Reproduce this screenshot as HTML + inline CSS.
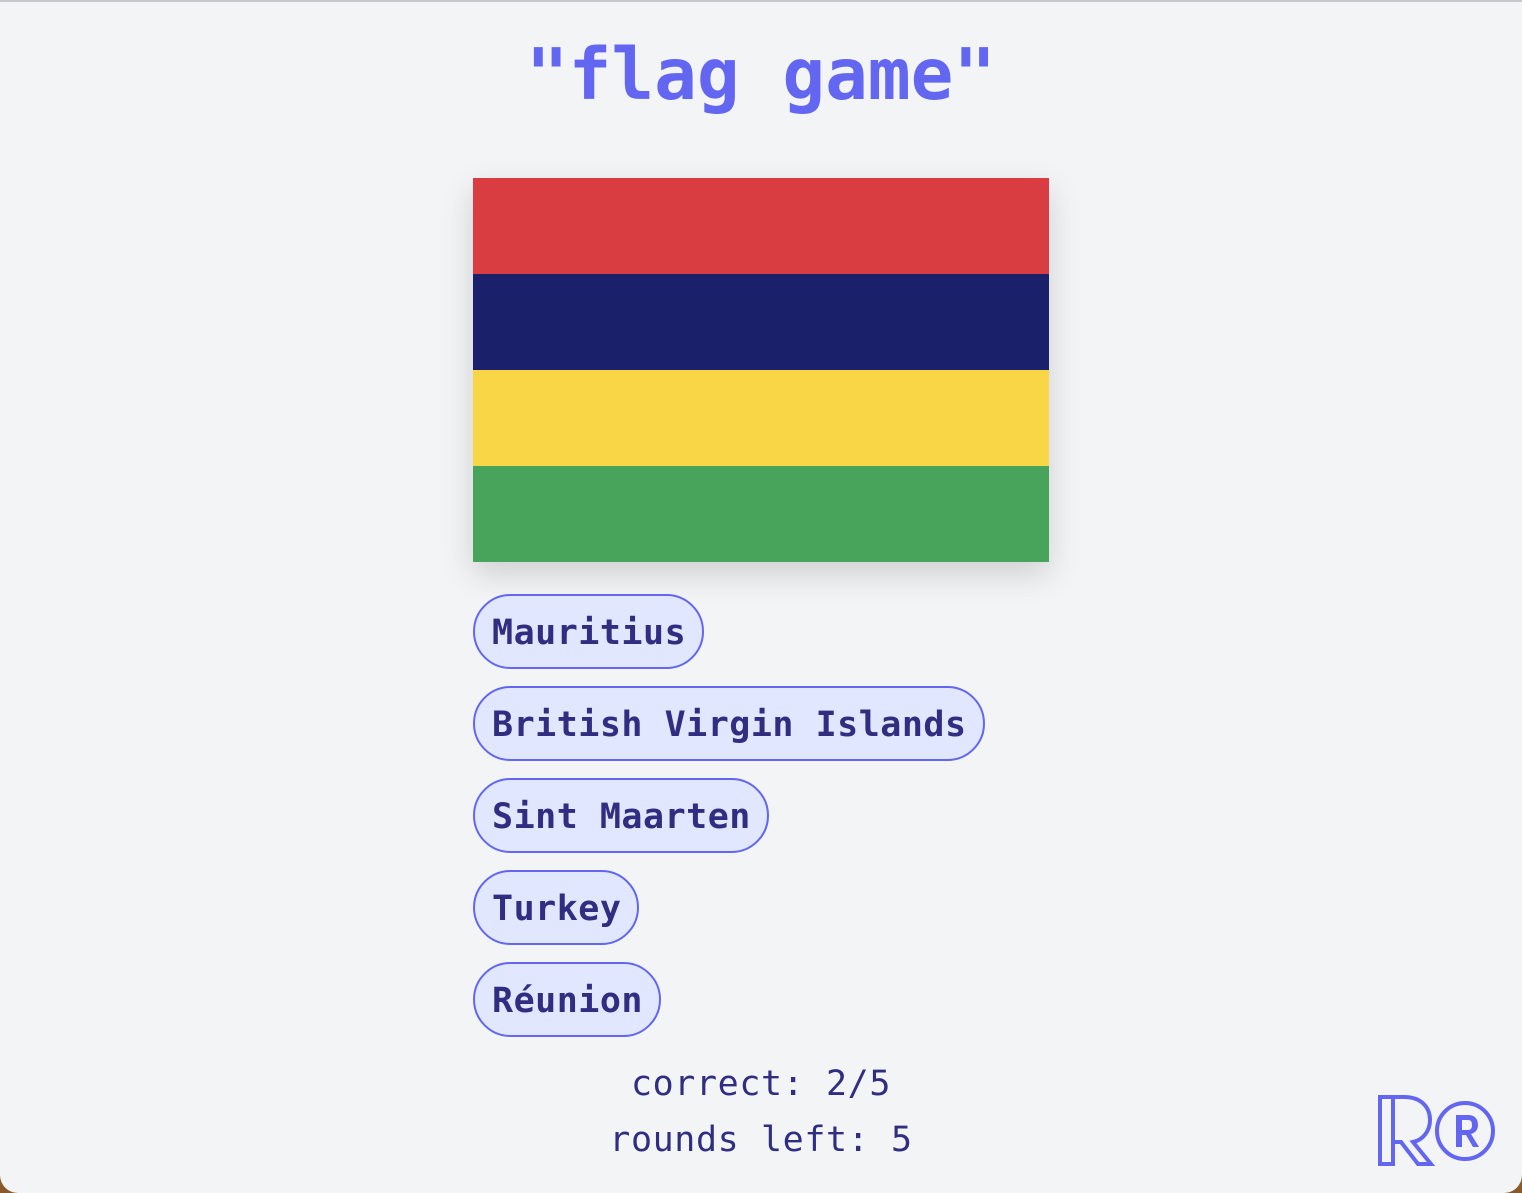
<!DOCTYPE html>
<html><head><meta charset="utf-8"><style>
html,body{margin:0;padding:0;width:1522px;height:1193px;overflow:hidden;background:#8a5a2b;}
.page{position:absolute;left:0;top:0;width:1522px;height:1193px;background:#f3f4f6;border-radius:0 0 18px 18px;border-top:2px solid #c8c9cc;box-sizing:border-box;font-family:"DejaVu Sans Mono","Liberation Mono",monospace;}
h1{position:absolute;left:0;width:1522px;top:28px;margin:0;text-align:center;font-size:71px;line-height:90px;font-weight:bold;color:#6366f1;}
.flag{position:absolute;left:473px;top:176px;width:576px;height:384px;box-shadow:0 12px 30px rgba(0,0,0,0.15);}
.flag div{height:96px}
.btn{position:absolute;left:473px;height:75px;box-sizing:border-box;border:2px solid #6366f1;border-radius:38px;background:#e0e7ff;color:#312e81;font-weight:bold;font-size:35px;letter-spacing:0.5px;line-height:74px;padding:0 16px 0 17px;white-space:nowrap;overflow:hidden;}
.stat{position:absolute;left:0;width:1522px;text-align:center;font-size:35px;letter-spacing:0.6px;color:#312e81;line-height:44px;}
</style></head><body><div class="page">
<h1>"flag game"</h1>
<div class="flag"><div style="background:#d93d42"></div><div style="background:#1b206a"></div><div style="background:#f9d645"></div><div style="background:#49a45b"></div></div>
<div class="btn" style="top:592px">Mauritius</div>
<div class="btn" style="top:684px">British Virgin Islands</div>
<div class="btn" style="top:776px">Sint Maarten</div>
<div class="btn" style="top:868px">Turkey</div>
<div class="btn" style="top:960px">Réunion</div>
<div class="stat" style="top:1060px">correct: 2/5</div>
<div class="stat" style="top:1116px">rounds left: 5</div>
<svg style="position:absolute;left:1376px;top:1092px" width="124" height="74" viewBox="0 0 124 74">
<g fill="none" stroke="#6366f1" stroke-width="4">
<path d="M4 3 H28 C46 3 54 14 54 26 C54 37 47 46 37 48 L55 70 H42 L25 48 H17 V70 H4 Z"/>
<path d="M17 3 V48"/>
<circle cx="89" cy="37" r="28"/>
</g>
<path d="M80 21 H92 C99 21 102 25 102 31 C102 36 99 39 95 40 L103 53 H97 L90 41 H86 V53 H80 Z M86 26 V36 H92 C95 36 96 34 96 31 C96 28 95 26 92 26 Z" fill="#6366f1"/>
</svg>
</div></body></html>
